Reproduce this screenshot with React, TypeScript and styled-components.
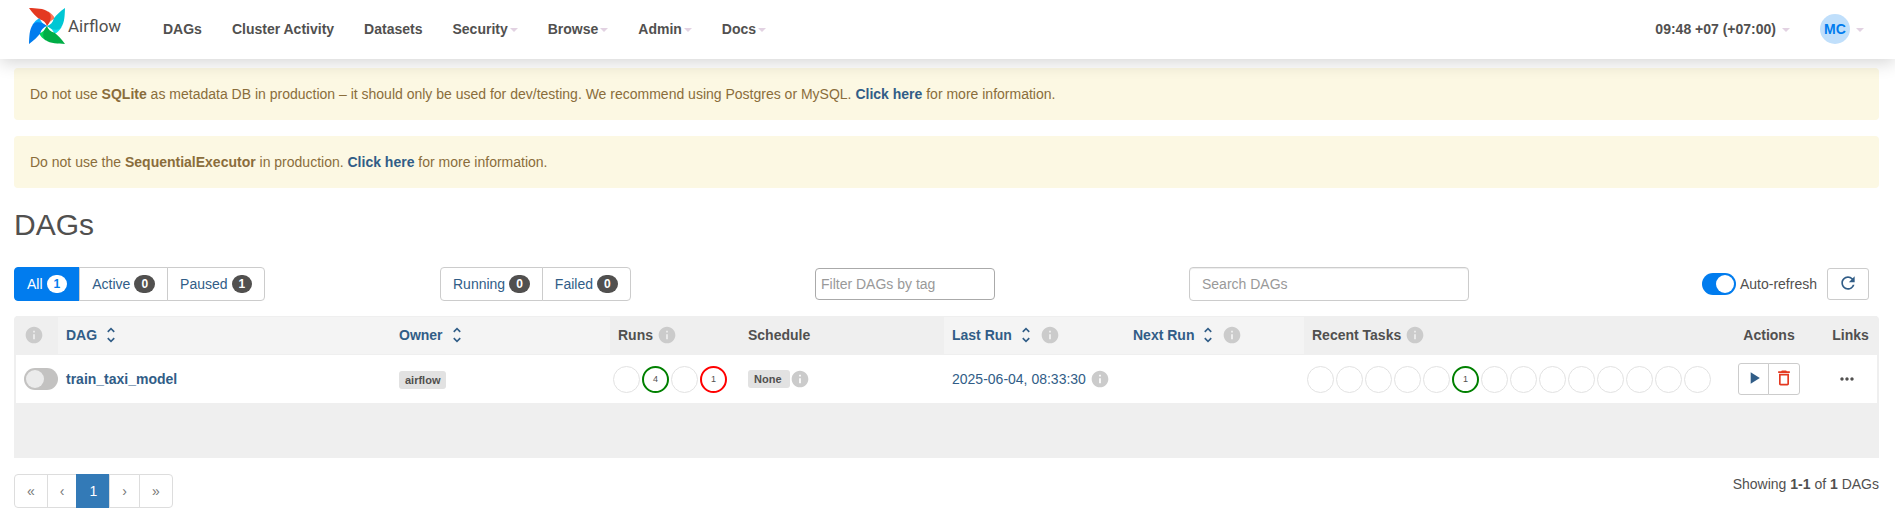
import React from "react";
import styled, { createGlobalStyle, css } from "styled-components";
import {
  MdDeleteOutline,
  MdInfo,
  MdMoreHoriz,
  MdPlayArrow,
  MdRefresh,
  MdUnfoldMore,
} from "react-icons/md";

const color = {
  text: "#51504f",
  link: "#315d87",
  blue: "#017cee",
  border: "#cccccc",
  panel: "#efefef",
};

const GlobalStyle = createGlobalStyle`
  *, *::before, *::after { box-sizing: border-box; }
  body {
    margin: 0;
    background: #ffffff;
    color: ${color.text};
    font: 14px/20px "Liberation Sans", Arial, sans-serif;
  }
  button, input { font: inherit; color: inherit; }
  a { color: ${color.link}; text-decoration: none; }
  svg { display: block; flex: none; }
`;

const NavBar = styled.header`
  position: relative;
  z-index: 1;
  display: flex;
  align-items: center;
  justify-content: space-between;
  height: 59px;
  padding: 0 16px 0 29px;
  background: #ffffff;
  box-shadow: 0 4px 16px rgba(0, 0, 0, 0.16);
`;

const NavGroup = styled.nav`
  display: flex;
  align-items: center;
`;

const Brand = styled.a`
  display: flex;
  align-items: center;
  gap: 3px;
  width: 119px;
  height: 36px;
  margin-bottom: 7px;
  color: ${color.text};
  font: 17px/20px Roboto, sans-serif;
`;

const NavLink = styled.a`
  padding: 4px 15px 6px;
  color: ${color.text};
  font-weight: bold;
`;

const NavMenu = styled.button<{ $gap: number }>`
  display: flex;
  align-items: center;
  gap: ${(p) => p.$gap}px;
  padding: 4px 15px 6px;
  border: 0;
  background: none;
  font-weight: bold;
`;

const Caret = styled.span`
  margin-top: 2px;
  border-top: 4px solid #e2d2e2;
  border-right: 4px solid transparent;
  border-left: 4px solid transparent;
`;

const Avatar = styled.span`
  display: grid;
  place-items: center;
  width: 30px;
  height: 30px;
  border-radius: 50%;
  background: #c0dffb;
  color: ${color.blue};
`;

const Page = styled.main`
  padding: 9px 16px 20px 14px;
`;

const Alert = styled.div`
  margin-bottom: 16px;
  padding: 16px;
  border-radius: 4px;
  background: #fcf8e3;
  color: #8a6d3b;

  a { font-weight: bold; }
`;

const Title = styled.h2`
  margin: 20px 0 26px;
  font-size: 30px;
  font-weight: normal;
  line-height: 33px;
`;

const Filters = styled.div`
  display: grid;
  grid-template-columns: 426fr 375fr 374fr 690fr;
  align-items: center;
  margin-bottom: 15px;
`;

const ButtonGroup = styled.div`
  display: flex;
`;

const Count = styled.span<{ $active?: boolean }>`
  padding: 3px 7px;
  border-radius: 10px;
  background: ${(p) => (p.$active ? "#ffffff" : color.text)};
  color: ${(p) => (p.$active ? color.blue : "#ffffff")};
  font-size: 12px;
  font-weight: bold;
  line-height: 12px;
`;

const FilterButton = styled.a<{ $active?: boolean }>`
  display: flex;
  align-items: center;
  gap: 4px;
  height: 34px;
  padding: 0 12px;
  border: 1px solid ${(p) => (p.$active ? color.blue : color.border)};
  background: ${(p) => (p.$active ? color.blue : "#ffffff")};
  color: ${(p) => (p.$active ? "#ffffff" : color.link)};

  & + & { margin-left: -1px; }
  &:first-child { border-radius: 4px 0 0 4px; }
  &:last-child { border-radius: 0 4px 4px 0; }
`;

const TextInput = styled.input<{ $tag?: boolean }>`
  width: 280px;
  height: 34px;
  padding: 0 12px;
  border: 1px solid ${color.border};
  border-radius: 4px;
  background: #ffffff;
  box-shadow: inset 0 1px 1px rgba(0, 0, 0, 0.075);
  ${(p) =>
    p.$tag &&
    css`
      width: 180px;
      height: 32px;
      padding: 0 5px;
      border-color: #aaaaaa;
      box-shadow: none;
    `}

  &::placeholder { color: #999999; opacity: 1; }
`;

const SearchRow = styled.div`
  display: flex;
  align-items: center;
  justify-content: space-between;
  padding-right: 10px;
`;

const RefreshControls = styled.div`
  display: flex;
  align-items: center;
  gap: 10px;
`;

const SwitchLabel = styled.label`
  display: flex;
  align-items: center;
  gap: 4px;
`;

const Switch = styled.input`
  appearance: none;
  flex: none;
  display: block;
  width: 34px;
  height: 22px;
  margin: 0;
  padding: 2px;
  border-radius: 11px;
  background: #c3c2c1;

  &::before {
    content: "";
    display: block;
    width: 18px;
    height: 18px;
    border-radius: 50%;
    background: #ebebeb;
  }
  &:checked { background: ${color.blue}; }
  &:checked::before { margin-left: 12px; background: #ffffff; }
`;

const IconButton = styled.button<{ $wide?: boolean; $danger?: boolean }>`
  display: grid;
  place-items: center;
  width: ${(p) => (p.$wide ? 42 : 31)}px;
  height: 32px;
  padding: 0 0 2px;
  border: 1px solid ${color.border};
  border-radius: ${(p) => (p.$wide ? "3px" : "0")};
  background: #ffffff;
  color: ${(p) => (p.$danger ? "#e43921" : color.link)};
`;

const ActionGroup = styled.div`
  display: flex;
  justify-content: center;

  button + button { margin-left: -1px; }
  button:first-child { border-radius: 3px 0 0 3px; }
  button:last-child { width: 32px; border-radius: 0 3px 3px 0; }
`;

const TableFrame = styled.div`
  padding: 0 2px 55px;
  border-radius: 4px 4px 0 0;
  background: ${color.panel};
`;

const Table = styled.table`
  width: 100%;
  table-layout: fixed;
  border-collapse: separate;
  border-spacing: 0;
`;

const HeadCell = styled.th<{ $sortable?: boolean; $align?: "left" | "center" }>`
  height: 39px;
  padding: 0 0 1px 8px;
  border: 1px solid ${color.panel};
  border-width: 1px 0;
  background: ${(p) => (p.$sortable ? "#f4f4f4" : color.panel)};
  text-align: left;
  vertical-align: middle;
  white-space: nowrap;
  ${(p) =>
    p.$align === "center" &&
    css`
      padding-left: 0;
      text-align: center;
    `}
`;

const Inline = styled.span<{ $gap?: number }>`
  display: flex;
  align-items: center;
  gap: ${(p) => p.$gap ?? 4}px;
`;

const SortLink = styled.a`
  display: flex;
  align-items: center;
  gap: 4px;
`;

const BodyCell = styled.td<{ $flush?: boolean }>`
  height: 48px;
  padding: ${(p) => (p.$flush ? "0" : "0 0 0 8px")};
  background: #ffffff;
  vertical-align: middle;
  white-space: nowrap;
`;

const DagLink = styled.a`
  font-weight: bold;
`;

const Label = styled.span<{ $wide?: boolean }>`
  display: inline-block;
  padding: ${(p) => (p.$wide ? "0 8px 0 6px" : "0 6px")};
  border-radius: 3px;
  background: #e2e2e2;
  color: ${color.text};
  font-size: 11px;
  font-weight: bold;
  line-height: 18px;
`;

const StateList = styled.div`
  display: flex;
  gap: 2px;
  padding-left: 3px;
`;

const State = styled.span<{ $tone?: string }>`
  display: grid;
  place-items: center;
  width: 27px;
  height: 27px;
  border: ${(p) => (p.$tone ? `2px solid ${p.$tone}` : "1px solid #e2e2e2")};
  border-radius: 50%;
  font-size: 9px;
  line-height: 10px;
`;

const LinksButton = styled.button`
  display: block;
  margin: 0 auto;
  padding: 0 8px 0 0;
  border: 0;
  background: none;
`;

const Footer = styled.footer`
  display: flex;
  justify-content: space-between;
  align-items: flex-start;
  margin-top: 16px;
`;

const Pager = styled.div`
  display: flex;
`;

const PageLink = styled.a<{ $active?: boolean }>`
  padding: 6px 12px;
  border: 1px solid ${(p) => (p.$active ? "#337ab7" : "#dddddd")};
  background: ${(p) => (p.$active ? "#337ab7" : "#ffffff")};
  color: ${(p) => (p.$active ? "#ffffff" : "#777777")};

  & + & { margin-left: -1px; }
  &:first-child { border-radius: 4px 0 0 4px; }
  &:last-child { border-radius: 0 4px 4px 0; }
`;

const blades = [
  ["#e43921", "#ff7557"],
  ["#00c7d4", "#11e1ee"],
  ["#00ad46", "#04d659"],
  ["#017cee", "#0cb6ff"],
];

const Pinwheel = () => (
  <svg width="36" height="36" viewBox="0 0 36 36" aria-hidden="true">
    {blades.map(([dark, light], i) => (
      <g key={dark} transform={`rotate(${i * 90} 18 18)`}>
        <path fill={light} d="M19 3.500C22 5 24.600 7.500 25.800 10.400C22 12.200 19.500 14.500 18 18Z" />
        <path
          fill={dark}
          d="M0 0C7 0.300 14.500 0.200 19.600 3.900C23.600 7.500 21.500 13.500 18 18C17 14.800 14.500 12 10.400 11.200C7 8.500 3.500 5 0 0Z"
        />
      </g>
    ))}
  </svg>
);

const Info = () => <MdInfo size={20} color="#cbcbcb" aria-hidden />;

const SortHead = ({ children }: { children: React.ReactNode }) => (
  <SortLink href="#">
    {children}
    <MdUnfoldMore size={20} aria-hidden />
  </SortLink>
);

const menus = ["Security", "Browse", "Admin", "Docs"];
const columns = [42, 333, 219, 130, 204, 181, 179, 410, 110, 53];
const runs = [{}, { tone: "green", count: 4 }, {}, { tone: "red", count: 1 }];
const tasks = Array.from({ length: 14 }, (_, i) =>
  i === 5 ? { tone: "green", count: 1 } : {}
);

const States = ({ items }: { items: { tone?: string; count?: number }[] }) => (
  <StateList>
    {items.map((s, i) => (
      <State key={i} $tone={s.tone}>{s.count}</State>
    ))}
  </StateList>
);

export default function App() {
  return (
    <>
      <GlobalStyle />
      <NavBar>
        <NavGroup>
          <Brand href="#">
            <Pinwheel />
            Airflow
          </Brand>
          <NavLink href="#">DAGs</NavLink>
          <NavLink href="#">Cluster Activity</NavLink>
          <NavLink href="#">Datasets</NavLink>
          {menus.map((m) => (
            <NavMenu key={m} type="button" $gap={2}>
              {m}
              <Caret />
            </NavMenu>
          ))}
        </NavGroup>
        <NavGroup>
          <NavMenu type="button" $gap={6}>
            09:48 +07 (+07:00)
            <Caret />
          </NavMenu>
          <NavMenu type="button" $gap={6}>
            <Avatar>MC</Avatar>
            <Caret />
          </NavMenu>
        </NavGroup>
      </NavBar>

      <Page>
        <Alert>
          Do not use <b>SQLite</b> as metadata DB in production – it should only be used
          for dev/testing. We recommend using Postgres or MySQL.{" "}
          <a href="#">Click here</a> for more information.
        </Alert>
        <Alert>
          Do not use the <b>SequentialExecutor</b> in production.{" "}
          <a href="#">Click here</a> for more information.
        </Alert>

        <Title>DAGs</Title>

        <Filters>
          <ButtonGroup>
            <FilterButton href="#" $active>All <Count $active>1</Count></FilterButton>
            <FilterButton href="#">Active <Count>0</Count></FilterButton>
            <FilterButton href="#">Paused <Count>1</Count></FilterButton>
          </ButtonGroup>
          <ButtonGroup>
            <FilterButton href="#">Running <Count>0</Count></FilterButton>
            <FilterButton href="#">Failed <Count>0</Count></FilterButton>
          </ButtonGroup>
          <div>
            <TextInput $tag aria-label="Filter DAGs by tag" placeholder="Filter DAGs by tag" />
          </div>
          <SearchRow>
            <TextInput type="search" aria-label="Search DAGs" placeholder="Search DAGs" />
            <RefreshControls>
              <SwitchLabel>
                <Switch type="checkbox" defaultChecked />
                Auto-refresh
              </SwitchLabel>
              <IconButton type="button" $wide aria-label="Refresh">
                <MdRefresh size={20} />
              </IconButton>
            </RefreshControls>
          </SearchRow>
        </Filters>

        <TableFrame>
          <Table>
            <colgroup>
              {columns.map((w, i) => (
                <col key={i} width={w} />
              ))}
            </colgroup>
            <thead>
              <tr>
                <HeadCell><Info /></HeadCell>
                <HeadCell $sortable><SortHead>DAG</SortHead></HeadCell>
                <HeadCell $sortable><SortHead>Owner</SortHead></HeadCell>
                <HeadCell><Inline>Runs <Info /></Inline></HeadCell>
                <HeadCell>Schedule</HeadCell>
                <HeadCell $sortable>
                  <Inline><SortHead>Last Run</SortHead><Info /></Inline>
                </HeadCell>
                <HeadCell $sortable>
                  <Inline><SortHead>Next Run</SortHead><Info /></Inline>
                </HeadCell>
                <HeadCell><Inline>Recent Tasks <Info /></Inline></HeadCell>
                <HeadCell $align="center">Actions</HeadCell>
                <HeadCell $align="center">Links</HeadCell>
              </tr>
            </thead>
            <tbody>
              <tr>
                <BodyCell>
                  <Switch type="checkbox" aria-label="Pause or unpause train_taxi_model" />
                </BodyCell>
                <BodyCell><DagLink href="#">train_taxi_model</DagLink></BodyCell>
                <BodyCell><Label>airflow</Label></BodyCell>
                <BodyCell $flush><States items={runs} /></BodyCell>
                <BodyCell>
                  <Inline $gap={0}><Label $wide>None</Label><Info /></Inline>
                </BodyCell>
                <BodyCell>
                  <Inline><a href="#">2025-06-04, 08:33:30</a><Info /></Inline>
                </BodyCell>
                <BodyCell />
                <BodyCell $flush><States items={tasks} /></BodyCell>
                <BodyCell $flush>
                  <ActionGroup>
                    <IconButton type="button" aria-label="Trigger DAG">
                      <MdPlayArrow size={20} />
                    </IconButton>
                    <IconButton type="button" $danger aria-label="Delete DAG">
                      <MdDeleteOutline size={20} />
                    </IconButton>
                  </ActionGroup>
                </BodyCell>
                <BodyCell $flush>
                  <LinksButton type="button" aria-label="Links">
                    <MdMoreHoriz size={20} />
                  </LinksButton>
                </BodyCell>
              </tr>
            </tbody>
          </Table>
        </TableFrame>

        <Footer>
          <Pager>
            <PageLink href="#">«</PageLink>
            <PageLink href="#">‹</PageLink>
            <PageLink href="#" $active>1</PageLink>
            <PageLink href="#">›</PageLink>
            <PageLink href="#">»</PageLink>
          </Pager>
          <div>
            Showing <b>1-1</b> of <b>1</b> DAGs
          </div>
        </Footer>
      </Page>
    </>
  );
}
